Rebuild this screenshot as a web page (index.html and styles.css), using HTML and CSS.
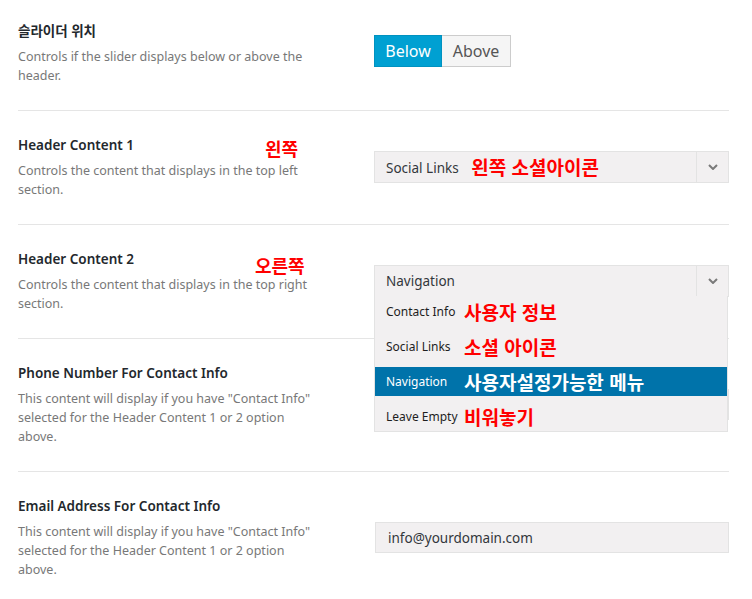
FILE: index.html
```html
<!DOCTYPE html>
<html lang="ko">
<head>
  <meta charset="UTF-8" />
  <title>Header Options</title>
  <meta name="viewport" content="width=device-width, initial-scale=1.0" />
  <link rel="stylesheet" href="styles.css">
</head>
<body>

  <div class="settings">

    <!-- Slider position -->
    <div class="row row-first">
      <div class="info">
        <h3 class="title">슬라이더 위치</h3>
        <p class="desc">Controls if the slider displays below or above the header.</p>
      </div>
      <div class="field">
        <div class="btn-group">
          <span class="btn active">Below</span>
          <span class="btn">Above</span>
        </div>
      </div>
    </div>

    <!-- Header content 1 -->
    <div class="row">
      <span class="note note-side note-left">왼쪽</span>
      <div class="info">
        <h3 class="title">Header Content 1</h3>
        <p class="desc">Controls the content that displays in the top left section.</p>
      </div>
      <div class="field">
        <div class="select">
          <span class="select-value">Social Links <span class="note note-inline">왼쪽 소셜아이콘</span></span>
          <span class="select-arrow">
            <svg width="10" height="6" viewBox="0 0 10 6"><path d="M1 1l4 4 4-4" fill="none" stroke="#7a7a7a" stroke-width="2"/></svg>
          </span>
        </div>
      </div>
    </div>

    <!-- Header content 2 (open) -->
    <div class="row row-open">
      <span class="note note-side note-right">오른쪽</span>
      <div class="info">
        <h3 class="title">Header Content 2</h3>
        <p class="desc">Controls the content that displays in the top right section.</p>
      </div>
      <div class="field">
        <div class="select">
          <span class="select-value">Navigation</span>
          <span class="select-arrow">
            <svg width="10" height="6" viewBox="0 0 10 6"><path d="M1 1l4 4 4-4" fill="none" stroke="#7a7a7a" stroke-width="2"/></svg>
          </span>
          <ul class="dropdown">
            <li><span class="opt">Contact Info</span><span class="note">사용자 정보</span></li>
            <li><span class="opt">Social Links</span><span class="note">소셜 아이콘</span></li>
            <li class="selected"><span class="opt">Navigation</span><span class="note">사용자설정가능한 메뉴</span></li>
            <li><span class="opt">Leave Empty</span><span class="note">비워놓기</span></li>
          </ul>
        </div>
      </div>
    </div>

    <!-- Phone -->
    <div class="row">
      <div class="info">
        <h3 class="title">Phone Number For Contact Info</h3>
        <p class="desc">This content will display if you have "Contact Info" selected for the Header Content 1 or 2 option above.</p>
      </div>
      <div class="field">
        <div class="input"></div>
      </div>
    </div>

    <!-- Email -->
    <div class="row">
      <div class="info">
        <h3 class="title">Email Address For Contact Info</h3>
        <p class="desc">This content will display if you have "Contact Info" selected for the Header Content 1 or 2 option above.</p>
      </div>
      <div class="field">
        <div class="input">info@yourdomain.com</div>
      </div>
    </div>

  </div>

</body>
</html>
```

FILE: styles.css
```css
body {
  margin: 0;
  background-color: #fff;
  font-family: "Noto Sans", "Noto Sans CJK KR", sans-serif;
  color: #23282d;
}

.settings {
  margin: 0 23px 0 18px;
}

/* Rows */
.row {
  position: relative;
  display: flex;
  align-items: center;
  padding: 24px 0 25px;
  border-bottom: 1px solid #e5e5e5;
}

.row-first {
  padding-top: 21px;
}

.row-open {
  z-index: 2;
}

.info {
  flex: none;
  width: 300px;
}

.title {
  margin: 0 0 6px;
  font-size: 13.5px;
  font-weight: 600;
  line-height: 20px;
  color: #23282d;
}

.desc {
  margin: 0;
  font-size: 12.5px;
  line-height: 19px;
  color: #787878;
}

.field {
  flex: none;
  width: 355px;
  margin-left: auto;
}

/* Button set */
.btn-group {
  display: flex;
  margin-bottom: 4px;
}

.btn {
  display: flex;
  align-items: center;
  justify-content: center;
  height: 32px;
  box-sizing: border-box;
  font-size: 16px;
  color: #555;
  background-color: #f5f5f5;
  border: 1px solid #ccc;
  border-left: none;
  width: 69px;
}

.btn.active {
  width: 68px;
  color: #fff;
  background-color: #00a0d2;
  border: 1px solid #0092c0;
}

/* Select */
.select {
  position: relative;
  display: flex;
  align-items: center;
  height: 32px;
  box-sizing: border-box;
  background-color: #f2f0f1;
  border: 1px solid #e3e3e3;
}

.select-value {
  flex: 1;
  padding-left: 11px;
  font-size: 13.5px;
  color: #32373c;
  white-space: nowrap;
}

.select-arrow {
  display: flex;
  align-items: center;
  justify-content: center;
  width: 31px;
  height: 100%;
  border-left: 1px solid #e3e3e3;
}

.dropdown {
  position: absolute;
  top: 100%;
  left: -1px;
  right: 0;
  margin: 0;
  padding: 1px 0 0;
  list-style: none;
  display: flex;
  flex-direction: column;
  gap: 6px;
  background-color: #f2f0f1;
  border: 1px solid #e3e3e3;
  border-top: none;
}

.dropdown li {
  display: flex;
  align-items: center;
  height: 29px;
  padding-left: 11px;
  font-size: 12px;
  color: #1e1e1e;
}

.dropdown li.selected {
  background-color: #0073aa;
  color: #fff;
}

.opt {
  display: inline-block;
  width: 78px;
}

/* Text input */
.input {
  display: flex;
  align-items: center;
  height: 31px;
  box-sizing: border-box;
  margin-left: 1px;
  padding-left: 12px;
  font-size: 13.5px;
  color: #32373c;
  background-color: #f2f0f1;
  border: 1px solid #e3e3e3;
}

/* Red annotations */
.note {
  font-family: "Noto Sans CJK KR", sans-serif;
  font-size: 19px;
  font-weight: 700;
  color: #ff0000;
  line-height: 1;
}

.note-inline {
  margin-left: 9px;
  vertical-align: -2px;
}

.dropdown li.selected .note {
  color: #fff;
}

.note-side {
  position: absolute;
  font-size: 18px;
}

.note-left {
  left: 247px;
  top: 28px;
}

.note-right {
  left: 237px;
  top: 31px;
}
```
